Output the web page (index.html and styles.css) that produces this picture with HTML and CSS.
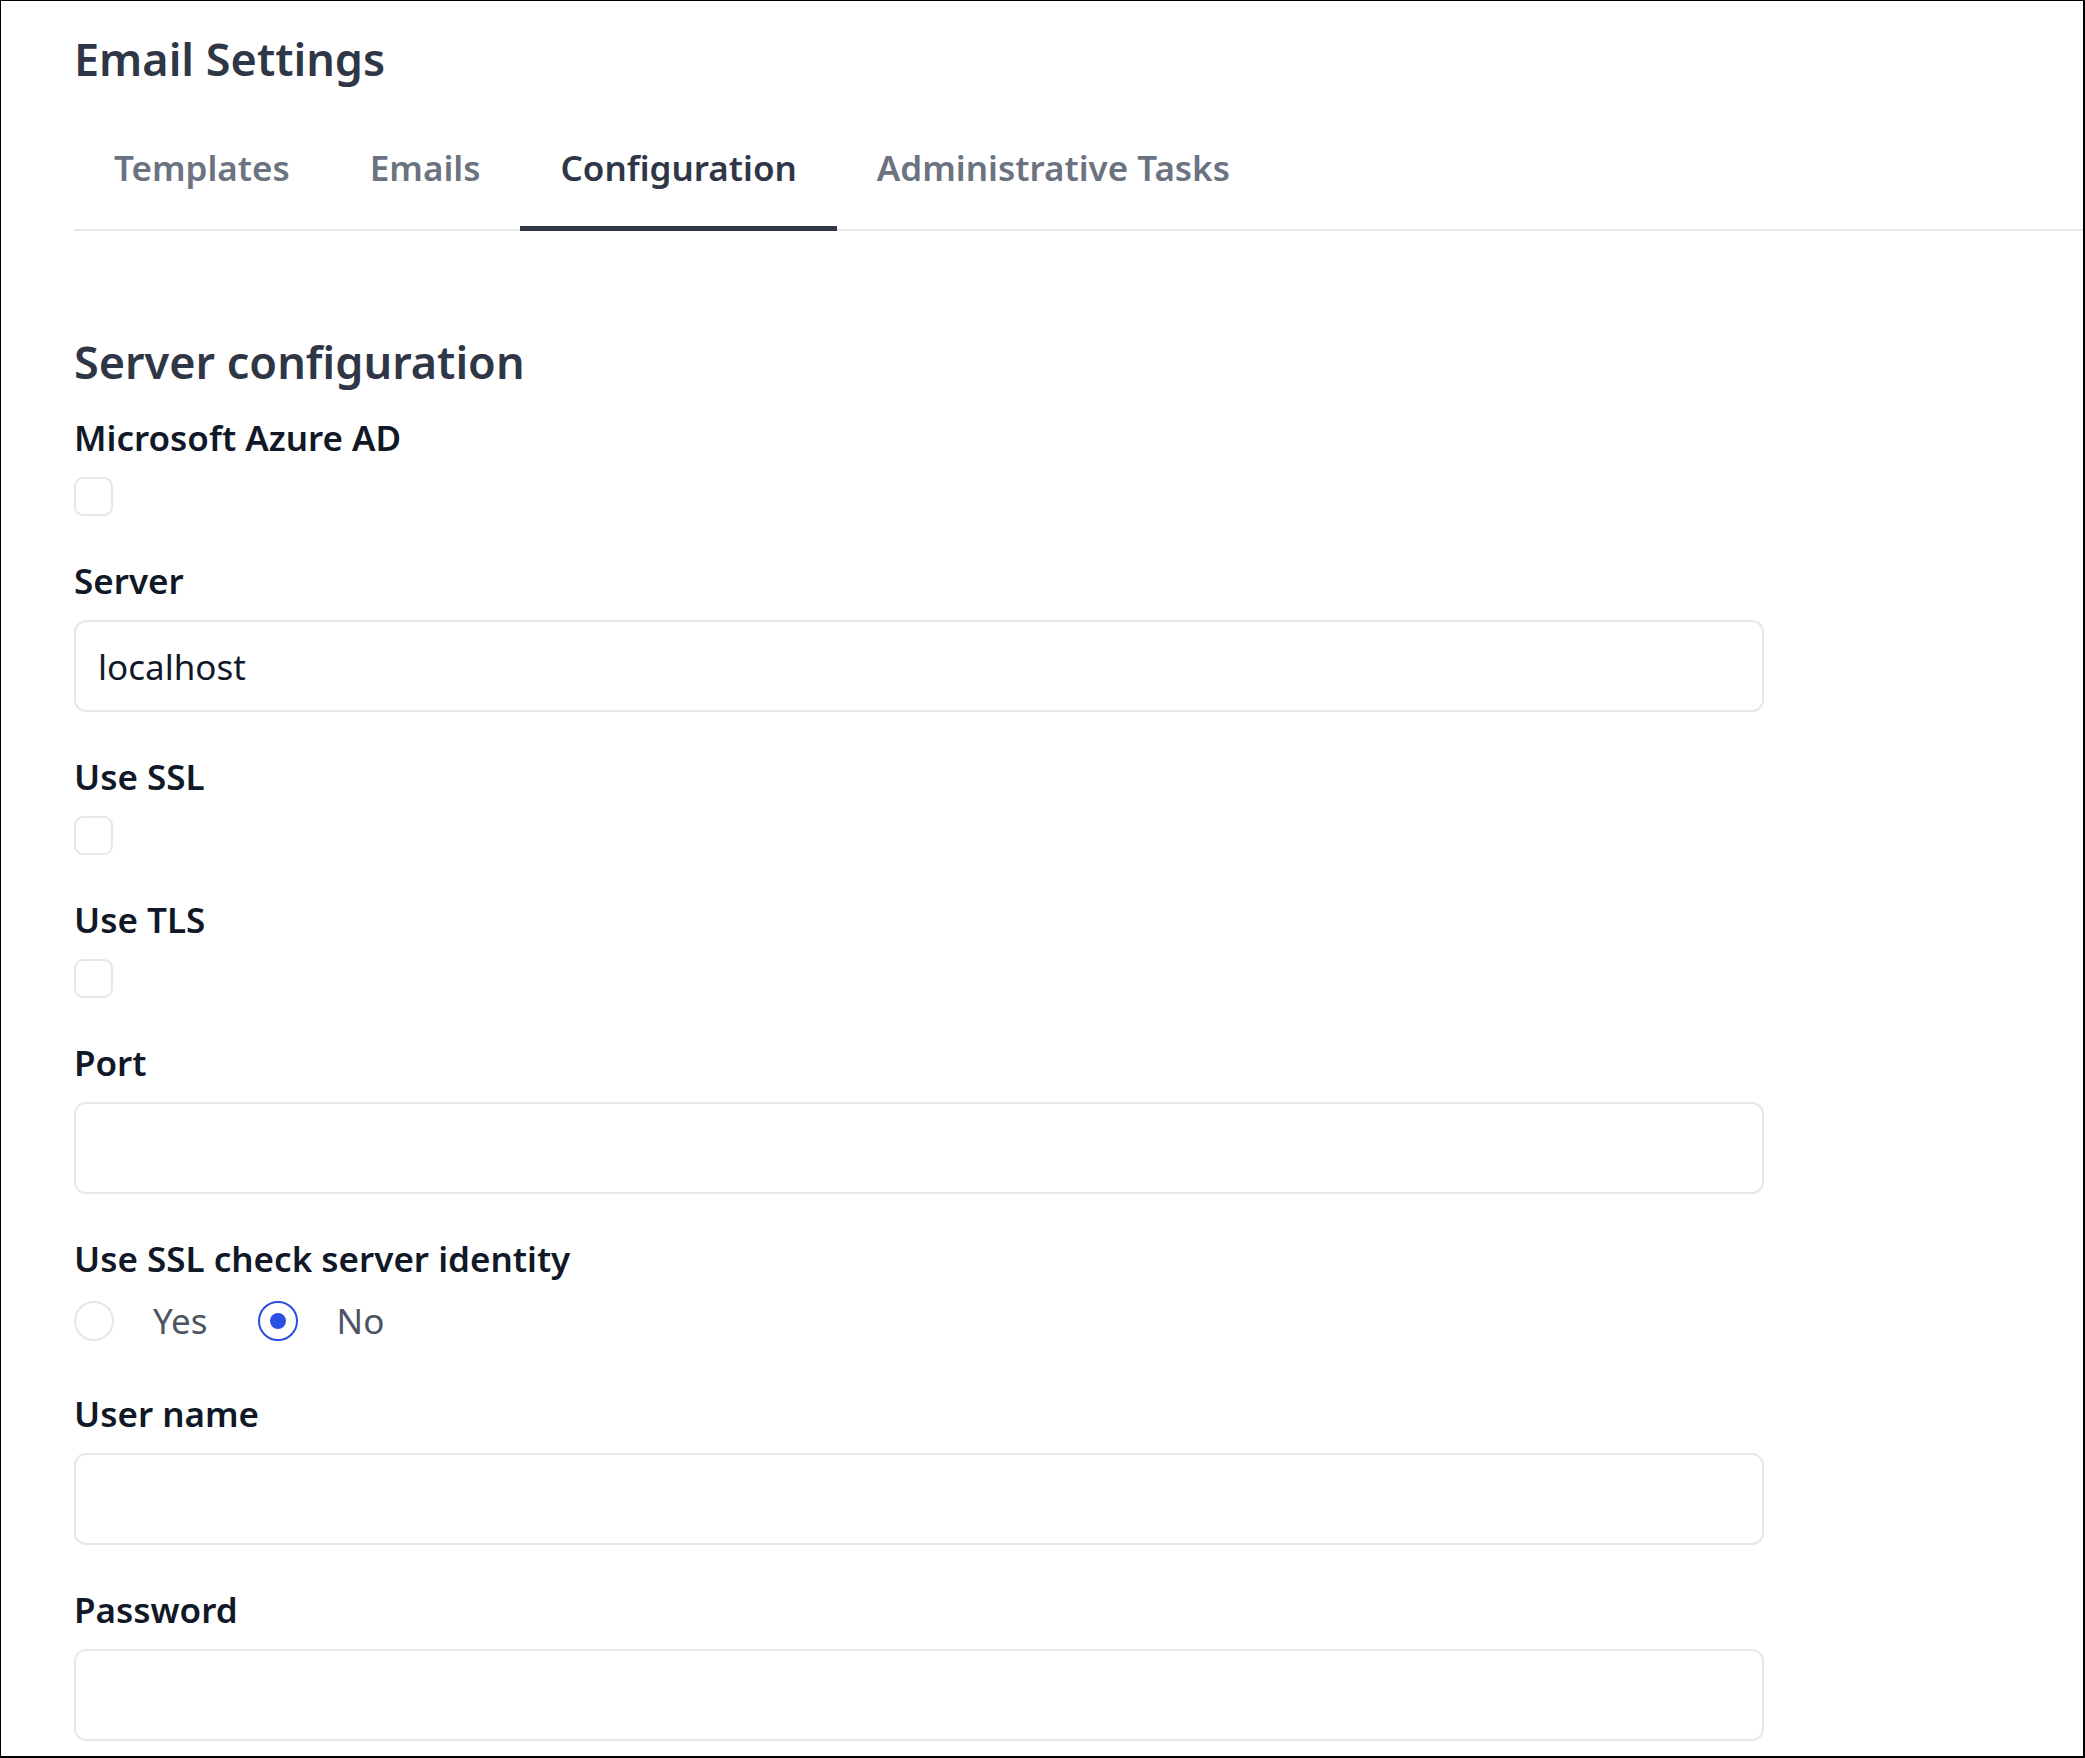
FILE: index.html
```html
<!DOCTYPE html>
<html lang="en">
<head>
<meta charset="utf-8">
<title>Email Settings</title>
<link rel="stylesheet" href="styles.css">
</head>
<body>
<div class="frame">
  <div class="page">
    <h1 class="page-title">Email Settings</h1>
    <nav class="tabs">
      <a class="tab">Templates</a>
      <a class="tab">Emails</a>
      <a class="tab tab-active">Configuration</a>
      <a class="tab">Administrative Tasks</a>
    </nav>
    <section class="section">
      <h2 class="section-title">Server configuration</h2>
      <form class="form">
        <div class="field">
          <label class="field-label">Microsoft Azure AD</label>
          <input class="checkbox" type="checkbox">
        </div>
        <div class="field">
          <label class="field-label">Server</label>
          <input class="text-input" type="text" value="localhost">
        </div>
        <div class="field">
          <label class="field-label">Use SSL</label>
          <input class="checkbox" type="checkbox">
        </div>
        <div class="field">
          <label class="field-label">Use TLS</label>
          <input class="checkbox" type="checkbox">
        </div>
        <div class="field">
          <label class="field-label">Port</label>
          <input class="text-input" type="text" value="">
        </div>
        <div class="field">
          <label class="field-label">Use SSL check server identity</label>
          <div class="radio-row">
            <label class="radio-option"><input class="radio" type="radio" name="ssl-identity"><span>Yes</span></label>
            <label class="radio-option"><input class="radio" type="radio" name="ssl-identity" checked><span>No</span></label>
          </div>
        </div>
        <div class="field">
          <label class="field-label">User name</label>
          <input class="text-input" type="text" value="">
        </div>
        <div class="field">
          <label class="field-label">Password</label>
          <input class="text-input" type="password" value="">
        </div>
      </form>
    </section>
  </div>
</div>
</body>
</html>
```
FILE: styles.css
```css
* {
  box-sizing: border-box;
}

html, body {
  margin: 0;
  padding: 0;
  background: #ffffff;
}

body {
  font-family: "Noto Sans", "Open Sans", sans-serif;
}

.frame {
  width: 2085px;
  height: 1758px;
  border-style: solid;
  border-color: #000000;
  border-width: 1px 2px 2px 1px;
  overflow: hidden;
  background: #ffffff;
}

.page {
  padding: 31px 0 0 73px;
}

.page-title {
  margin: 0;
  font-size: 45px;
  line-height: 54px;
  font-weight: 600;
  color: #2f3646;
}

.tabs {
  display: flex;
  margin-top: 58px;
  border-bottom: 2px solid #e5e7eb;
}

.tab {
  display: block;
  padding: 0 40px 34px;
  font-size: 35px;
  line-height: 48px;
  font-weight: 600;
  color: #6b7280;
  border-bottom: 5px solid transparent;
  margin-bottom: -2px;
}

.tab-active {
  color: #2f3646;
  border-bottom-color: #2f3747;
}

.section {
  margin-top: 104px;
}

.section-title {
  margin: 0;
  font-size: 45px;
  line-height: 54px;
  font-weight: 600;
  color: #2f3646;
}

.form {
  display: flex;
  flex-direction: column;
  gap: 41px;
  width: 1690px;
  margin-top: 25px;
}

.field {
  display: flex;
  flex-direction: column;
  align-items: flex-start;
}

.field-label {
  display: block;
  font-size: 35px;
  line-height: 48px;
  font-weight: 600;
  color: #111827;
  margin-bottom: 15px;
}

.checkbox {
  appearance: none;
  -webkit-appearance: none;
  margin: 0;
  width: 39px;
  height: 39px;
  border: 2px solid #e5e7eb;
  border-radius: 9px;
  background: #ffffff;
}

.text-input {
  display: block;
  width: 100%;
  height: 92px;
  margin: 0;
  padding: 0 22px;
  border: 2px solid #e5e7eb;
  border-radius: 12px;
  background: #ffffff;
  font-family: "Noto Sans", "Open Sans", sans-serif;
  font-size: 35px;
  color: #111827;
  outline: none;
}

.radio-row {
  display: flex;
  align-items: center;
  gap: 50px;
  height: 51px;
  margin-top: -3px;
  margin-bottom: 3px;
}

.radio-option {
  display: flex;
  align-items: center;
  gap: 39px;
  font-size: 35px;
  line-height: 51px;
  color: #4b5563;
}

.radio {
  appearance: none;
  -webkit-appearance: none;
  margin: 0;
  width: 40px;
  height: 40px;
  border: 2px solid #e5e7eb;
  border-radius: 50%;
  background: #ffffff;
  display: grid;
  place-items: center;
}

.radio:checked {
  border-color: #2a4fe2;
}

.radio:checked::after {
  content: "";
  width: 16px;
  height: 16px;
  border-radius: 50%;
  background: #2a4fe2;
}
```
